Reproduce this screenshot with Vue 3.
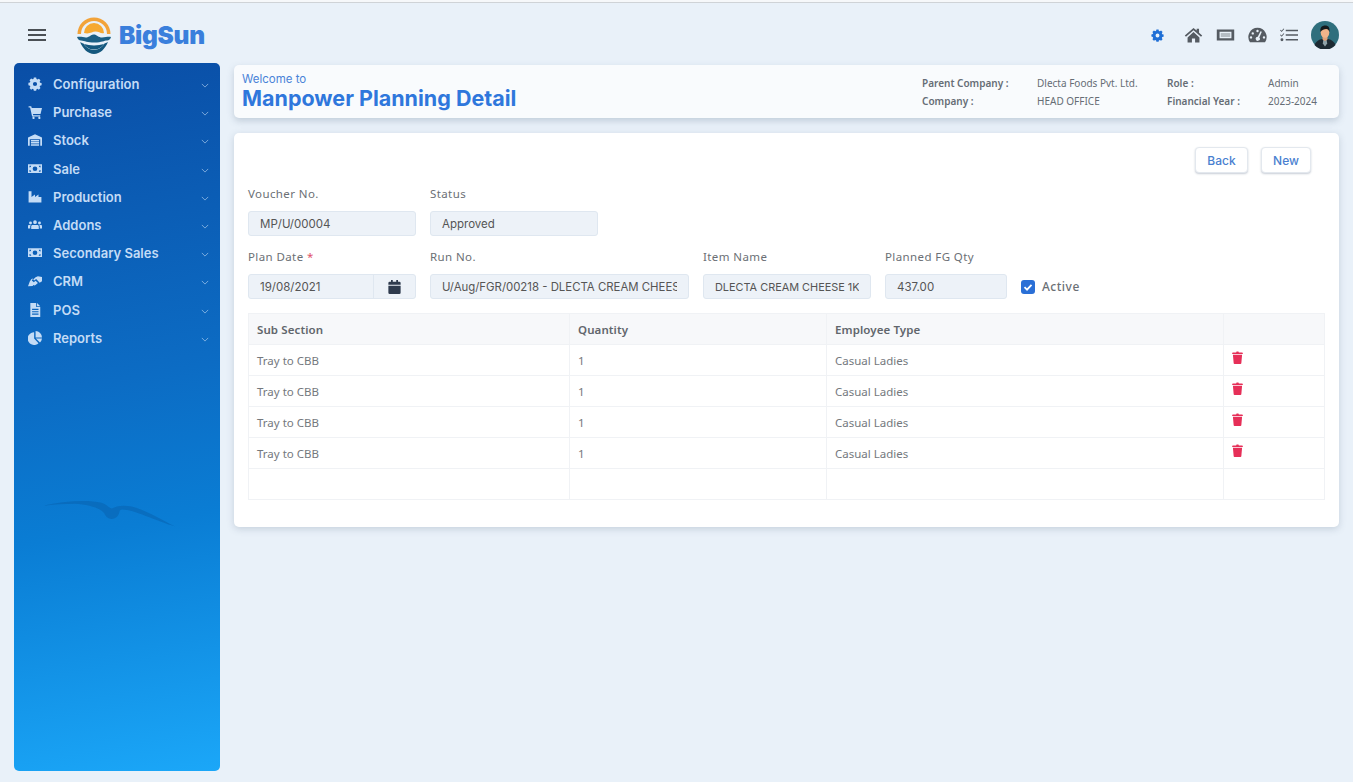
<script setup>
const menu = [
  { label: 'Configuration', icon: 'gear' },
  { label: 'Purchase', icon: 'cart' },
  { label: 'Stock', icon: 'warehouse' },
  { label: 'Sale', icon: 'money' },
  { label: 'Production', icon: 'industry' },
  { label: 'Addons', icon: 'users' },
  { label: 'Secondary Sales', icon: 'money' },
  { label: 'CRM', icon: 'hands' },
  { label: 'POS', icon: 'file' },
  { label: 'Reports', icon: 'pie' }
];

const rows = [
  { section: 'Tray to CBB', qty: 1, type: 'Casual Ladies' },
  { section: 'Tray to CBB', qty: 1, type: 'Casual Ladies' },
  { section: 'Tray to CBB', qty: 1, type: 'Casual Ladies' },
  { section: 'Tray to CBB', qty: 1, type: 'Casual Ladies' }
];

const gearPath = 'M10 1h4l.6 2.600 1.700.7 2.300-1.400 2.800 2.800-1.400 2.300.7 1.700 2.600.6v4l-2.600.6-.7 1.700 1.400 2.300-2.800 2.800-2.300-1.400-1.700.7-.6 2.600h-4l-.6-2.600-1.700-.7-2.300 1.400-2.800-2.800 1.400-2.300-.7-1.700L.7 14v-4l2.600-.6.7-1.700-1.400-2.300 2.800-2.800 2.300 1.400 1.700-.7zM12 8.400a3.600 3.600 0 1 0 0 7.200 3.600 3.600 0 0 0 0-7.200z';
</script>

<template>
  <div class="page">
    <div class="strip"></div>
    <header class="topbar">
      <div class="brand">
        <div class="burger"><span></span><span></span><span></span></div>
        <svg class="logo" viewBox="1 0 36 37">
          <path d="M2.500 17a16.500 16.500 0 0 1 33 0h-3.500a13 13 0 0 0-26 0z" fill="#f2a33a" />
          <path d="M9 16a10 10 0 0 1 20 0c-3 1-5-1.500-8.500-1.500-3.500 0-5.500 3-11.500 1.500z" fill="#f6a931" />
          <path d="M2 20c5-1 8 1.500 11 0s4-3 6.500-2.500 4 3 7.500 3 6-1 9-.5c-.5 2-2 3.500-4 3.500-3 0-5 2-12.500 2S10 24 6 23.500C4 23.300 2.500 22 2 20z" fill="#1b5f84" />
          <path d="M5 25c3 7 8 12 14 12s11-5 14-12c-1 .5-2 1-3.500 1.500C27 30.500 23 33 19 33s-8-2.500-10.500-6.500C7 26.200 6 25.500 5 25z" fill="#14587e" />
          <path d="M9 27c3 .5 6 1.500 10 1.500s7-1 10-1.500c-2 3.500-6 5.500-10 5.500S11 30.500 9 27z" fill="#14587e" />
        </svg>
        <span class="brand-name">BigSun</span>
      </div>
      <div class="top-icons">
        <svg class="ti gear-blue" viewBox="0 0 24 24"><path :d="gearPath" fill="#1f6fd6" fill-rule="evenodd" /></svg>
        <svg class="ti" viewBox="0 0 24 20"><path d="M12 1L1 10.500l1.500 1.700L12 4l9.500 8.200 1.500-1.700-4-3.500V2h-3v2.400zM4.500 13v6.500h5.500v-5h4v5h5.500V13L12 6.300z" fill="#555b62" /></svg>
        <svg class="ti" viewBox="0 0 24 18"><path d="M1 2h22v14H1zM4.500 5v8h15V5z" fill="#555b62" fill-rule="evenodd" /><rect x="6" y="6.500" width="12" height="5" fill="#555b62" opacity=".35" /></svg>
        <svg class="ti" viewBox="0 0 24 20"><path d="M12 1a11.500 11.500 0 0 0-9.500 18h19A11.500 11.500 0 0 0 12 1zM12 3.500a1.500 1.500 0 1 1 0 3 1.500 1.500 0 0 1 0-3zM6 6.500a1.500 1.500 0 1 1 0 3 1.500 1.500 0 0 1 0-3zM3.800 11.500a1.500 1.500 0 1 1 0 3 1.500 1.500 0 0 1 0-3zM20.200 11.500a1.500 1.500 0 1 1 0 3 1.500 1.500 0 0 1 0-3zM17.500 6l-3.200 7a2.600 2.600 0 1 1-2-.9l3.500-6.900z" fill="#555b62" fill-rule="evenodd" /></svg>
        <svg class="ti last" viewBox="0 0 22 18"><path d="M7 2.500h15v1.800H7zM7 8.200h15V10H7zM7 14h15v1.800H7z" fill="#555b62" /><path d="M.8 2.500l1.200 1.200L4.400 1l.8.7L2 5.200 0 3.200zM.8 8.300L2 9.500l2.400-2.700.8.7L2 11 0 9zM2.400 13a1.800 1.800 0 1 1 0 3.600 1.800 1.800 0 0 1 0-3.600z" fill="#555b62" /></svg>
        <svg class="avatar" viewBox="0 0 28 28">
          <circle cx="14" cy="14" r="14" fill="#2f6f7d" />
          <path d="M3.500 24c1.500-4 5-5.500 7.500-6h6c2.500.5 6 2 7.500 6A14 14 0 0 1 3.500 24z" fill="#1d2a33" />
          <path d="M12.500 17.500h3l.7 5-2.200 3-2.200-3z" fill="#8fa2a8" />
          <path d="M11.500 15h5v3.500l-2.500 1.500-2.500-1.500z" fill="#e0a27a" />
          <ellipse cx="14" cy="11.500" rx="4.300" ry="5.300" fill="#f0b48a" />
          <path d="M9.500 11c-.7-4.500 1.500-6.500 4.700-6.500s4.800 2 4.200 6.500c-.5-2-1.500-3-3.200-3s-4.700 1-5.700 3z" fill="#15191c" />
        </svg>
      </div>
    </header>

    <div class="body">
      <aside class="sidebar">
        <nav class="menu">
          <div v-for="item in menu" :key="item.label" class="menu-item">
            <svg class="menu-icon" viewBox="0 0 24 24">
              <path v-if="item.icon === 'gear'" :d="gearPath" fill-rule="evenodd" />
              <path v-else-if="item.icon === 'cart'" d="M1 2h4.500l1 3H24l-2.500 10.500H8.500l.5 2h12v2.200H7L3.600 4.200H1zM9 20.300a1.900 1.900 0 1 1 0 3.700 1.900 1.900 0 0 1 0-3.700zM19 20.300a1.900 1.900 0 1 1 0 3.700 1.900 1.900 0 0 1 0-3.700z" />
              <path v-else-if="item.icon === 'warehouse'" d="M12 2L0 7.500V22h3V10.500h18V22h3V7.500zM5 12h14v2.400H5zM5 15.600h14V18H5zM5 19.200h14V22H5z" />
              <path v-else-if="item.icon === 'money'" d="M0 4h24v15H0zM12 7.500a4 4 0 1 0 0 8 4 4 0 0 0 0-8zM2.500 6.500v3a3 3 0 0 0 3-3zM18.500 6.500a3 3 0 0 0 3 3v-3zM2.500 13.500v3h3a3 3 0 0 0-3-3zM21.500 13.500a3 3 0 0 0-3 3h3z" fill-rule="evenodd" />
              <path v-else-if="item.icon === 'industry'" d="M1 2h5v10l6-4.500V12l6-4.500V12h5v9.500H1z" />
              <path v-else-if="item.icon === 'users'" d="M12 4a3.200 3.200 0 1 1 0 6.400A3.200 3.200 0 0 1 12 4zM4.300 6a2.500 2.500 0 1 1 0 5 2.500 2.500 0 0 1 0-5zM19.700 6a2.500 2.500 0 1 1 0 5 2.500 2.500 0 0 1 0-5zM8 12h8c1.500 0 2.500 1 2.500 2.500V19h-13v-4.500C5.500 13 6.500 12 8 12zM0 14c0-1.500.8-2 2-2h2.800a4 4 0 0 0-1 2.800V18H0zM24 14c0-1.500-.8-2-2-2h-2.800a4 4 0 0 1 1 2.800V18H24z" />
              <path v-else-if="item.icon === 'hands'" d="M24 5l-7-1-4 1.500L9 9.500l1.500 1.500L14 8.500l6 6.500 4-2.500zM0 21l3-8 3-4.500 3-1-2.500 3.500 3.500 3 3-2.500 4 4-4 3.500-2 .5-2-.5-1 1.500z" />
              <path v-else-if="item.icon === 'file'" d="M4 0h10v7h7v17H4zM15.500 0L21 5.500h-5.500zM7 10v2h11v-2zM7 14v2h11v-2zM7 18v2h11v-2z" fill-rule="evenodd" />
              <path v-else d="M10.500 2v11l7.500 8A11 11 0 1 1 10.500 2zM13 0a11 11 0 0 1 11 11H13zM13.500 13H24a11 11 0 0 1-3.500 6.800z" />
            </svg>
            <span class="menu-label">{{ item.label }}</span>
            <svg class="chev" viewBox="0 0 10 6"><path d="M1 1l4 4 4-4" fill="none" stroke="currentColor" stroke-width="1" /></svg>
          </div>
        </nav>
        <svg class="bird" viewBox="0 0 140 36">
          <path d="M0 6C20 2 45-1 62 3c6 2 7 5 11 6 5-3 12-4 21-2 16 4 32 14 46 21C120 22 96 10 84 10c-2 0-3 1-3 3-1 4-4 7-8 7s-7-3-8-6C60 8 48 5 34 4 22 4 10 5 0 6z" fill="#0860ab" opacity=".5" />
        </svg>
      </aside>

      <main class="content">
        <section class="title-card">
          <div class="title-text">
            <div class="welcome">Welcome to</div>
            <h1>Manpower Planning Detail</h1>
          </div>
          <div class="meta">
            <span class="meta-key">Parent Company :</span><span>Dlecta Foods Pvt. Ltd.</span>
            <span class="meta-key">Role :</span><span>Admin</span>
            <span class="meta-key">Company :</span><span>HEAD OFFICE</span>
            <span class="meta-key">Financial Year :</span><span>2023-2024</span>
          </div>
        </section>

        <section class="card">
          <div class="actions">
            <button class="btn">Back</button>
            <button class="btn">New</button>
          </div>

          <div class="form-row">
            <label class="field w168">
              <span class="lbl">Voucher No.</span>
              <div class="input">MP/U/00004</div>
            </label>
            <label class="field w168">
              <span class="lbl">Status</span>
              <div class="input">Approved</div>
            </label>
          </div>

          <div class="form-row">
            <label class="field w168">
              <span class="lbl">Plan Date <em>*</em></span>
              <div class="input date">
                <span class="date-val">19/08/2021</span>
                <span class="addon">
                  <svg viewBox="0 0 14 16" class="cal"><path d="M3 0h2v2h4V0h2v2h1.500A1.500 1.500 0 0 1 14 3.500V5.500H0V3.500A1.500 1.500 0 0 1 1.500 2H3zM0 6.500h14v8a1.500 1.500 0 0 1-1.500 1.500h-11A1.500 1.500 0 0 1 0 14.500z" fill="#2e3a4d" /></svg>
                </span>
              </div>
            </label>
            <label class="field w259">
              <span class="lbl">Run No.</span>
              <div class="input"><span class="clip run">U/Aug/FGR/00218 - DLECTA CREAM CHEESE 1KG</span></div>
            </label>
            <label class="field w168">
              <span class="lbl">Item Name</span>
              <div class="input"><span class="clip">DLECTA CREAM CHEESE 1KG</span></div>
            </label>
            <label class="field w122">
              <span class="lbl">Planned FG Qty</span>
              <div class="input">437.00</div>
            </label>
            <div class="check">
              <span class="box">
                <svg viewBox="0 0 14 14"><path d="M3.500 7.200l2.500 2.400 4.500-4.800" fill="none" stroke="#fff" stroke-width="1.800" /></svg>
              </span>
              <span>Active</span>
            </div>
          </div>

          <table class="grid">
            <colgroup>
              <col class="c1" />
              <col class="c2" />
              <col class="c3" />
              <col />
            </colgroup>
            <thead>
              <tr>
                <th>Sub Section</th>
                <th>Quantity</th>
                <th>Employee Type</th>
                <th></th>
              </tr>
            </thead>
            <tbody>
              <tr v-for="(row, i) in rows" :key="i">
                <td>{{ row.section }}</td>
                <td>{{ row.qty }}</td>
                <td>{{ row.type }}</td>
                <td>
                  <svg class="trash" viewBox="0 0 12 14"><path d="M1 1.500h3.500L5 .5h2l.5 1H11a.8.8 0 0 1 .8 .8v1H.2v-1A.8.8 0 0 1 1 1.500zM1 4h10l-.8 9a1 1 0 0 1-1 1H2.800a1 1 0 0 1-1-1z" fill="#e62f58" /></svg>
                </td>
              </tr>
              <tr>
                <td></td>
                <td></td>
                <td></td>
                <td></td>
              </tr>
            </tbody>
          </table>
        </section>
      </main>
    </div>
  </div>
</template>

<style scoped>
.page {
  width: 1353px;
  height: 782px;
  overflow: hidden;
  color: #555;
  font-family: 'Noto Sans', sans-serif;
}

.strip {
  height: 2px;
  background: #f6f8fa;
  border-bottom: 1px solid #cfd3d7;
}

.topbar {
  height: 60px;
  display: flex;
  align-items: center;
  justify-content: space-between;
  padding: 4px 14px 0 28px;
  box-sizing: border-box;
}

.brand {
  display: flex;
  align-items: center;
}

.burger {
  width: 18px;
  display: flex;
  flex-direction: column;
  gap: 3.500px;
  margin-right: 30px;
}

.burger span {
  height: 1.500px;
  background: #4a4f55;
}

.logo {
  width: 36px;
  height: 37px;
  margin-right: 7px;
}

.brand-name {
  font-family: Inter, sans-serif;
  font-weight: 900;
  font-size: 24.500px;
  letter-spacing: -0.3px;
  color: #3a7fdc;
}

.top-icons {
  display: flex;
  align-items: center;
}

.ti {
  width: 19px;
  height: 16px;
  margin-right: 13px;
}

.gear-blue {
  width: 13px;
  height: 13px;
  margin-right: 20px;
}

.ti.last {
  width: 18px;
}

.avatar {
  width: 28px;
  height: 28px;
}

.body {
  display: flex;
  padding-left: 14px;
  gap: 14px;
}

.sidebar {
  position: relative;
  width: 206px;
  height: 708px;
  flex: none;
  border-radius: 5px;
  background: linear-gradient(170deg, #0a4ea6 0%, #0c6cc4 45%, #0a7dd4 65%, #1ba7f8 100%);
  padding-top: 7px;
  box-sizing: border-box;
}

.menu-item {
  height: 28.200px;
  display: flex;
  align-items: center;
  padding: 0 11px 0 14px;
  color: #c4dcf6;
}

.menu-icon {
  width: 14px;
  height: 14px;
  fill: #c4dcf6;
  flex: none;
  margin-right: 11px;
}

.menu-label {
  flex: 1;
  font-family: Inter, sans-serif;
  font-size: 13px;
  font-weight: 600;
}

.chev {
  width: 8px;
  height: 5px;
  opacity: .75;
  margin-top: 3px;
}

.bird {
  position: absolute;
  left: 28px;
  top: 437px;
  width: 134px;
  height: 34px;
}

.content {
  width: 1105px;
  flex: none;
}

.title-card {
  height: 53px;
  margin-top: 2px;
  background: #f9fbfd;
  border-radius: 5px;
  box-shadow: 0 3px 7px rgba(90, 110, 135, .28);
  display: flex;
  justify-content: space-between;
  padding: 0 22px 0 8px;
  box-sizing: border-box;
}

.welcome {
  font-family: Inter, sans-serif;
  font-size: 11.500px;
  color: #4a83d8;
  margin-top: 6px;
  line-height: 16px;
}

h1 {
  margin: 0;
  font-family: Inter, sans-serif;
  font-size: 21.500px;
  font-weight: 700;
  line-height: 22px;
  color: #2f77dc;
}

.meta {
  display: grid;
  grid-template-columns: 115px 130px 101px auto;
  grid-auto-rows: 17.500px;
  align-content: center;
  padding-top: 4px;
  font-size: 10px;
  color: #666d75;
}

.meta-key {
  font-weight: 600;
}

.card {
  margin-top: 15px;
  height: 394px;
  box-sizing: border-box;
  background: #fff;
  border-radius: 5px;
  box-shadow: 0 2px 7px rgba(90, 110, 135, .25);
  padding: 14px 14px 0;
}

.actions {
  display: flex;
  justify-content: flex-end;
  gap: 13px;
  padding-right: 14px;
  height: 26px;
}

.btn {
  height: 26px;
  width: 53px;
  padding: 0;
  background: #fff;
  border: 1px solid #e3e8ee;
  border-radius: 4px;
  box-shadow: 0 1px 2px rgba(70, 90, 120, .3);
  font-family: Inter, sans-serif;
  font-size: 12px;
  font-weight: 500;
  color: #4a7fd0;
}

.btn + .btn {
  width: 50px;
}

.form-row {
  display: flex;
  gap: 14px;
  margin-top: 13px;
}

.field {
  display: flex;
  flex-direction: column;
}

.w168 {
  width: 168px;
}

.w259 {
  width: 259px;
}

.w122 {
  width: 122px;
}

.lbl {
  font-size: 11.500px;
  letter-spacing: .4px;
  line-height: 16px;
  color: #6b6f75;
  margin-bottom: 9px;
}

.lbl em {
  font-style: normal;
  color: #e0526a;
}

.input {
  height: 25px;
  box-sizing: border-box;
  background: #edf2f8;
  border: 1px solid #dfe7f0;
  border-radius: 3px;
  padding: 0 11px;
  display: flex;
  align-items: center;
  font-family: Inter, sans-serif;
  font-size: 11.500px;
  color: #555;
  white-space: nowrap;
}

.clip {
  display: block;
  overflow: hidden;
  font-size: 10.900px;
}

.run {
  font-size: 11.400px;
}

.date {
  padding: 0;
}

.date-val {
  flex: 1;
  padding-left: 11px;
}

.addon {
  width: 41px;
  height: 100%;
  border-left: 1px solid #dfe7f0;
  display: flex;
  align-items: center;
  justify-content: center;
}

.cal {
  width: 13px;
  height: 14px;
}

.check {
  display: flex;
  align-items: center;
  gap: 7px;
  align-self: flex-end;
  height: 25px;
  font-size: 12px;
  font-weight: 500;
  letter-spacing: .5px;
  color: #6b6f75;
}

.box {
  width: 14px;
  height: 14px;
  border-radius: 3px;
  background: #2a6fd6;
  display: flex;
}

.grid {
  width: 1077px;
  margin-top: 14px;
  border-collapse: collapse;
  table-layout: fixed;
  font-size: 11.500px;
  color: #74787d;
}

.c1 {
  width: 321px;
}

.c2 {
  width: 257px;
}

.c3 {
  width: 397px;
}

.grid th,
.grid td {
  border: 1px solid #f0f2f5;
  height: 31px;
  padding: 0 8px;
  text-align: left;
  box-sizing: border-box;
}

.grid th {
  background: #f7f8fa;
  font-weight: 600;
  font-size: 11.500px;
  letter-spacing: .1px;
  color: #61666c;
}

.trash {
  width: 11px;
  height: 13px;
  display: block;
  margin-bottom: 5px;
}
</style>

<style>
html,
body {
  margin: 0;
  background: #e9f1f9;
}
</style>
